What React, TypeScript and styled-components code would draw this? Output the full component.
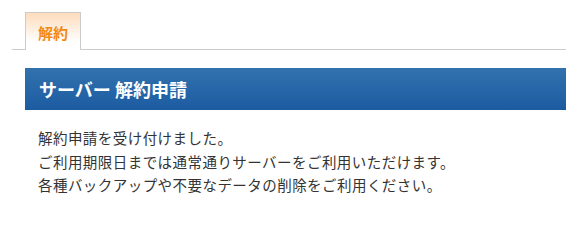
import React from 'react';
import styled, { createGlobalStyle } from 'styled-components';

const GlobalStyle = createGlobalStyle`
  html, body {
    margin: 0;
    padding: 0;
    background: #fff;
  }
  body {
    font-family: "Noto Sans CJK JP", "Noto Sans", sans-serif;
    color: #333;
  }
`;

const Page = styled.div`
  width: 566px;
  height: 240px;
  padding: 12px 0 0 12px;
  box-sizing: border-box;
`;

const TabBar = styled.div`
  display: flex;
  border-bottom: 1px solid #cccccc;
  padding-left: 13px;
  height: 37px;
`;

const Tab = styled.div<{ $active?: boolean }>`
  width: 56px;
  height: 38px;
  box-sizing: border-box;
  border: 1px solid #cccccc;
  border-bottom: none;
  background: ${(p) => (p.$active ? 'linear-gradient(#fddcbc, #ffffff 80%)' : '#f4f4f4')};
  color: #f28a14;
  font-size: 15px;
  font-weight: bold;
  display: flex;
  align-items: center;
  justify-content: center;
  padding-top: 1px;
`;

const Content = styled.div`
  padding: 18px 0 0 13px;
`;

const Heading = styled.h2`
  margin: 0;
  height: 42px;
  display: flex;
  align-items: center;
  padding-left: 14px;
  background: linear-gradient(#3272ae, #1d5ba1);
  color: #fff;
  font-size: 18px;
  font-weight: bold;
`;

const Body = styled.div`
  padding: 16px 0 0 13px;
  font-size: 14.5px;
  letter-spacing: 0.45px;
  line-height: 23.5px;
  color: #333;
`;

const Line = styled.p`
  margin: 0;
`;

export default function App() {
  return (
    <>
      <GlobalStyle />
      <Page>
        <TabBar>
          <Tab $active>解約</Tab>
        </TabBar>
        <Content>
          <Heading>サーバー 解約申請</Heading>
          <Body>
            <Line>解約申請を受け付けました。</Line>
            <Line>ご利用期限日までは通常通りサーバーをご利用いただけます。</Line>
            <Line>各種バックアップや不要なデータの削除をご利用ください。</Line>
          </Body>
        </Content>
      </Page>
    </>
  );
}
